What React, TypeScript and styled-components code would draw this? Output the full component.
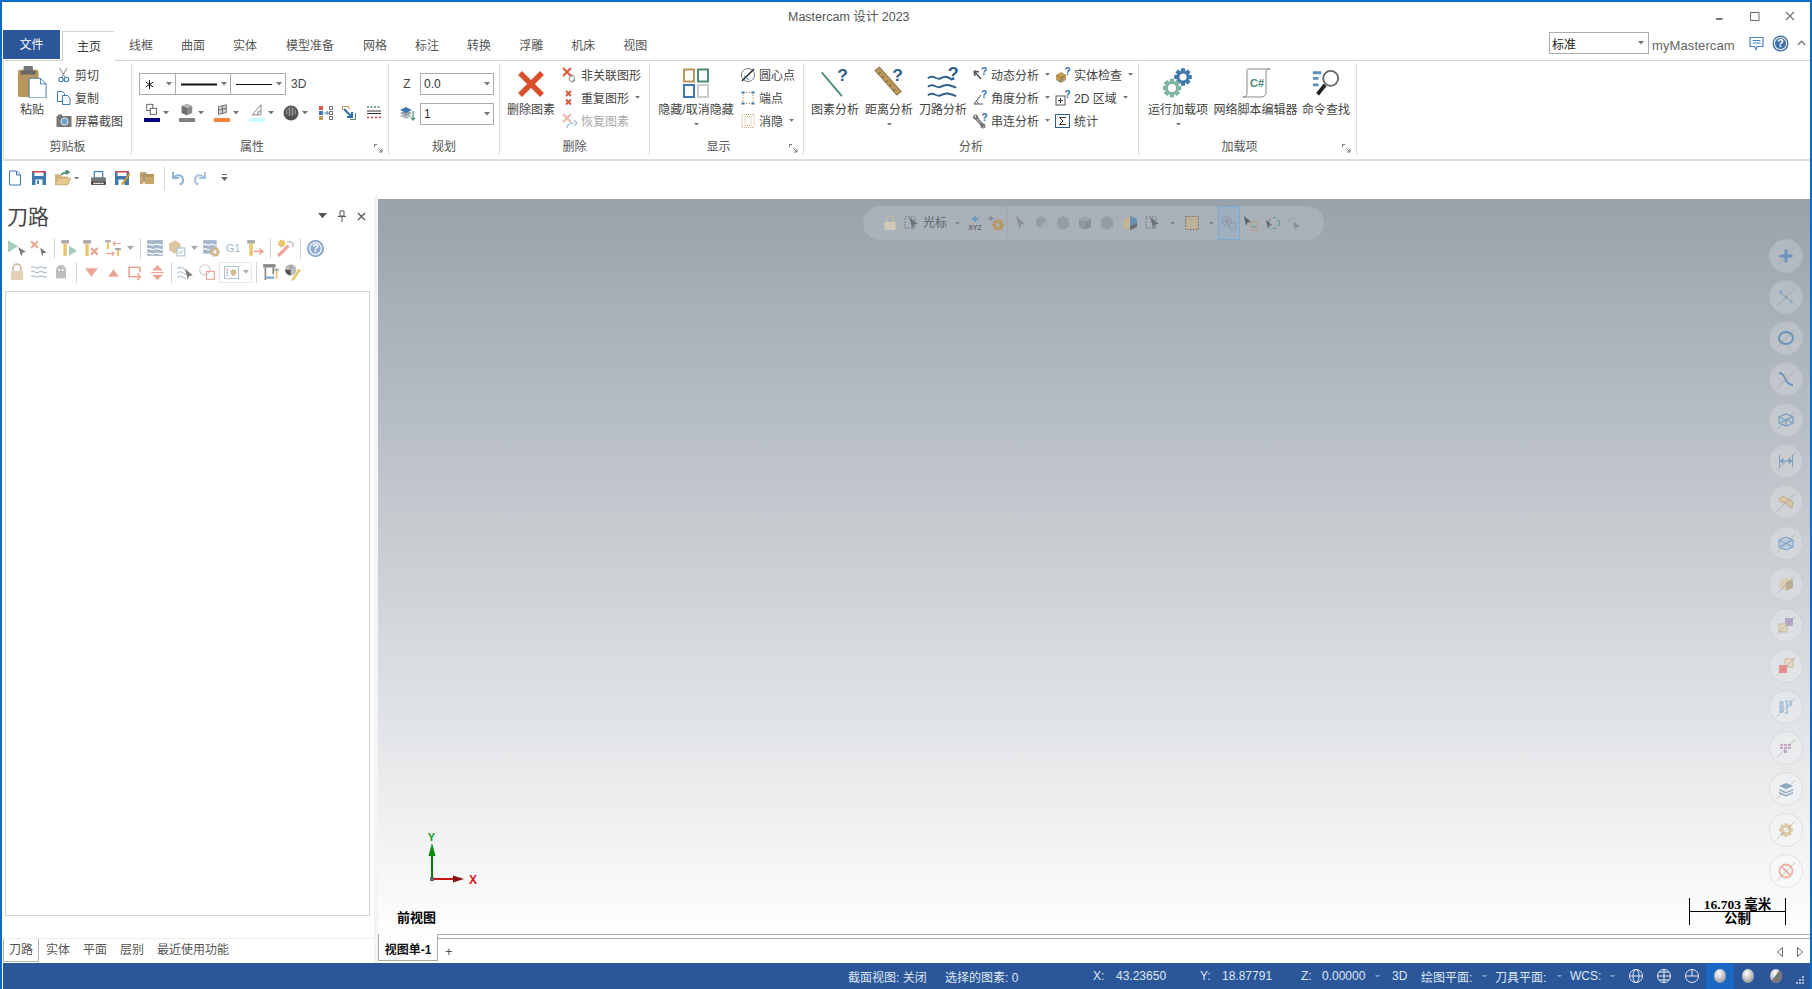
import React from 'react';
import styled, { createGlobalStyle } from 'styled-components';

const GlobalStyle = createGlobalStyle`
    html, body {
        margin: 0;
        padding: 0;
        background: #fff;
        overflow: hidden;
    }
    * {
        box-sizing: border-box;
    }
    body {
        font-family: "Liberation Sans", "Noto Sans CJK SC", sans-serif;
        font-size: 12px;
        color: #444;
    }
`;

const Page = styled.div`
    width: 1812px;
    height: 989px;
    display: flex;
    flex-direction: column;
    background: #fff;
    border: 2px solid #0b6bc8;
    border-bottom: none;
    overflow: hidden;
`;

/* ---------- title + tabs ---------- */

const TitleBar = styled.div`
    height: 28px;
    flex: none;
    display: flex;
    align-items: center;
    padding-left: 786px;
    color: #555;
    font-size: 12.5px;
`;

const TitleText = styled.div`
    flex: 1;
    padding-bottom: 2px;
`;

const WinButtons = styled.div`
    display: flex;
    align-items: center;
    margin-right: 3px;
`;

const WinButton = styled.div`
    width: 35px;
    height: 20px;
    display: flex;
    align-items: center;
    justify-content: center;
`;

const TabRow = styled.div`
    height: 30px;
    flex: none;
    display: flex;
    align-items: flex-end;
    padding-left: 1px;
    position: relative;
    z-index: 1;
`;

const FileTab = styled.div`
    width: 57px;
    height: 29px;
    margin-right: 3px;
    margin-bottom: 1px;
    padding-bottom: 2px;
    background: #2b579a;
    color: #fff;
    display: flex;
    align-items: center;
    justify-content: center;
`;

const Tab = styled.div<{ $active?: boolean; $wide?: boolean }>`
    height: ${(p) => (p.$active ? '30px' : '29px')};
    padding: 0 ${(p) => (p.$wide ? 15 : 14)}px ${(p) => (p.$active ? 3 : 2)}px;
    display: flex;
    align-items: center;
    background: #fff;
    color: ${(p) => (p.$active ? '#333' : '#555')};
    border: 1px solid ${(p) => (p.$active ? '#d2d2d2' : 'transparent')};
    border-bottom: none;
    margin: ${(p) => (p.$active ? '0 -1px -1px -1px' : '0 -1px 1px -1px')};
`;

const TabRight = styled.div`
    margin-left: auto;
    display: flex;
    align-items: center;
    height: 30px;
    padding-bottom: 4px;
`;

const ProfileCombo = styled.div`
    width: 100px;
    height: 22px;
    border: 1px solid #ababab;
    display: flex;
    align-items: center;
    justify-content: space-between;
    padding: 0 4px 0 2px;
    color: #222;
`;

const MyLink = styled.div`
    width: 101px;
    padding-left: 3px;
    padding-top: 4px;
    color: #666;
    font-size: 13px;
    letter-spacing: 0.1px;
`;

const Helpers = styled.div`
    display: flex;
    align-items: center;
    gap: 8px;
    margin-right: 4px;
    margin-left: -1px;
`;

/* ---------- ribbon ---------- */

const Ribbon = styled.div`
    height: 101px;
    flex: none;
    margin-left: 1px;
    display: flex;
    border-top: 1px solid #d2d2d2;
    border-bottom: 2px solid #dcdcdc;
    border-left: 1px solid #dcdcdc;
`;

const Group = styled.div<{ $w: number }>`
    width: ${(p) => p.$w}px;
    flex: none;
    height: 92px;
    margin-top: 2px;
    display: flex;
    flex-direction: column;
    border-right: 1px solid #dcdcdc;
    position: relative;
`;

const GroupBody = styled.div<{ $pad?: number }>`
    height: 73px;
    display: flex;
    padding-left: ${(p) => p.$pad ?? 0}px;
`;

const GroupLabel = styled.div<{ $launcher?: boolean }>`
    height: 18px;
    display: flex;
    align-items: center;
    justify-content: center;
    color: #555;
    padding-right: ${(p) => (p.$launcher ? 16 : 0)}px;
`;

const Launcher = styled.div`
    position: absolute;
    right: 5px;
    bottom: 2px;
    display: flex;
`;

const BigButton = styled.div<{ $w: number; $ml?: number }>`
    width: ${(p) => p.$w}px;
    margin-left: ${(p) => p.$ml ?? 0}px;
    flex: none;
    display: flex;
    flex-direction: column;
    align-items: center;
    white-space: nowrap;
`;

const BigIcon = styled.div`
    height: 38px;
    padding-bottom: 3px;
    display: flex;
    align-items: flex-end;
    justify-content: center;
`;

const BigLabel = styled.div`
    height: 18px;
    line-height: 18px;
    color: #444;
`;

const CaretRow = styled.div`
    height: 10px;
    display: flex;
    align-items: center;
`;

const SmallCol = styled.div<{ $w?: number; $ml?: number }>`
    width: ${(p) => (p.$w ? `${p.$w}px` : 'auto')};
    margin-left: ${(p) => p.$ml ?? 0}px;
    flex: none;
    display: flex;
    flex-direction: column;
`;

const SmallRow = styled.div<{ $off?: boolean }>`
    height: 23px;
    display: flex;
    align-items: center;
    gap: 3px;
    white-space: nowrap;
    color: ${(p) => (p.$off ? '#aaa' : '#444')};
`;

const CaretBox = styled.span`
    display: inline-flex;
    margin-left: 3px;
`;

const PropColumn = styled.div`
    display: flex;
    flex-direction: column;
    padding-top: 10px;
`;

const ComboRow = styled.div`
    display: flex;
    align-items: center;
`;

const LineCell = styled.div<{ $w: number }>`
    width: ${(p) => p.$w}px;
    height: 22px;
    border: 1px solid #ababab;
    margin-right: -1px;
    display: flex;
    align-items: center;
    justify-content: space-between;
    padding: 0 3px 0 5px;
    background: #fff;
`;

const ThreeD = styled.div`
    margin-left: 6px;
    color: #444;
`;

const SwatchRow = styled.div`
    display: flex;
    align-items: center;
    padding: 8px 0 0 4px;
`;

const SwatchButton = styled.div`
    width: 35px;
    flex: none;
    display: flex;
    align-items: center;
`;

const SwatchStack = styled.div`
    width: 17px;
    display: flex;
    flex-direction: column;
    align-items: center;
`;

const Swatch = styled.div<{ $c: string }>`
    width: 16px;
    height: 4px;
    margin-top: 1px;
    background: ${(p) => p.$c};
`;

const PlainTool = styled.div<{ $w: number }>`
    width: ${(p) => p.$w}px;
    flex: none;
    display: flex;
`;

const PlanColumn = styled.div`
    display: flex;
    flex-direction: column;
    gap: 8px;
    padding-top: 10px;
`;

const PlanRow = styled.div`
    display: flex;
    align-items: center;
`;

const PlanLabel = styled.div`
    width: 31px;
    display: flex;
    justify-content: center;
    padding-left: 5px;
    font-size: 12px;
`;

const PlanInput = styled.div`
    width: 74px;
    height: 22px;
    border: 1px solid #ababab;
    display: flex;
    align-items: center;
    justify-content: space-between;
    padding: 0 3px;
    color: #333;
`;

/* ---------- quick access ---------- */

const Qat = styled.div`
    height: 34px;
    flex: none;
    display: flex;
    align-items: center;
    padding-left: 5px;
`;

const QatItem = styled.div<{ $w: number }>`
    width: ${(p) => p.$w}px;
    flex: none;
    display: flex;
    align-items: center;
`;

const QatDivider = styled.div`
    width: 1px;
    height: 24px;
    background: #d8d8d8;
    margin: 0 5px 0 3px;
`;

/* ---------- main ---------- */

const Main = styled.div`
    flex: 1;
    min-height: 0;
    display: flex;
`;

const LeftPanel = styled.div`
    width: 376px;
    flex: none;
    display: flex;
    flex-direction: column;
    border-right: 4px solid #f4f4f4;
`;

const PanelHead = styled.div`
    height: 41px;
    flex: none;
    display: flex;
    align-items: center;
    padding: 0 8px 1px 5px;
`;

const PanelTitle = styled.div`
    flex: 1;
    font-size: 21px;
    color: #444;
`;

const PanelActions = styled.div`
    display: flex;
    align-items: center;
    gap: 10px;
    margin-top: 2px;
`;

const ToolRow = styled.div<{ $pad: number }>`
    height: 24px;
    flex: none;
    display: flex;
    align-items: center;
    padding-left: ${(p) => p.$pad}px;
`;

const ToolCell = styled.div`
    width: 22px;
    height: 22px;
    flex: none;
    display: flex;
    align-items: center;
    justify-content: center;
`;

const ToolCaret = styled.div`
    width: 12px;
    flex: none;
    display: flex;
    justify-content: center;
`;

const ToolSep = styled.div<{ $w: number }>`
    width: ${(p) => p.$w}px;
    flex: none;
    height: 21px;
    display: flex;
    justify-content: center;
    &::before {
        content: '';
        width: 1px;
        background: #d5d5d5;
    }
`;

const ToolCombo = styled.div`
    width: 33px;
    height: 21px;
    flex: none;
    margin-left: 1px;
    border: 1px solid #e6e6e6;
    display: flex;
    align-items: center;
    padding-left: 4px;
    gap: 4px;
`;

const TreeBox = styled.div`
    flex: 1;
    min-height: 0;
    margin: 7px 4px 22px 3px;
    border: 1px solid #d3d3d3;
`;

const BottomTabs = styled.div`
    height: 25px;
    flex: none;
    display: flex;
    align-items: flex-start;
    padding-left: 1px;
    border-top: 1px solid #eee;
`;

const BottomTab = styled.div<{ $active?: boolean }>`
    height: 23px;
    padding: 0 5px 3px;
    margin-right: 1px;
    display: flex;
    align-items: center;
    color: #555;
    border: 1px solid ${(p) => (p.$active ? '#b4b4b4' : 'transparent')};
    border-top: none;
    background: #fff;
`;

const Workspace = styled.div`
    flex: 1;
    min-width: 0;
    display: flex;
    flex-direction: column;
    padding-top: 4px;
`;

const Viewport = styled.div`
    flex: 1;
    min-height: 0;
    position: relative;
    overflow: hidden;
    background: linear-gradient(180deg, #98a2ab 0%, #b9bfc6 32%, #dcdfe2 66%, #fefefe 100%);
`;

const FloatBar = styled.div`
    position: absolute;
    left: 485px;
    top: 7px;
    width: 461px;
    height: 34px;
    border-radius: 17px;
    background: rgba(205, 210, 215, 0.28);
    display: flex;
    align-items: center;
    padding-left: 16px;
    color: #5c6369;
`;

const FloatItem = styled.div<{ $w: number; $on?: boolean }>`
    width: ${(p) => p.$w}px;
    height: ${(p) => (p.$on ? '34px' : 'auto')};
    flex: none;
    display: flex;
    align-items: center;
    justify-content: center;
    opacity: 0.72;
    background: ${(p) => (p.$on ? 'rgba(110, 170, 225, 0.25)' : 'transparent')};
    border: ${(p) => (p.$on ? '1px solid #6ba6d9' : 'none')};
`;

const FloatText = styled.div`
    width: 26px;
    flex: none;
    padding-bottom: 4px;
    white-space: nowrap;
`;

const FloatSep = styled.div`
    width: 1px;
    height: 34px;
    flex: none;
    background: rgba(150, 156, 162, 0.35);
`;

const SideRail = styled.div`
    position: absolute;
    right: 7px;
    top: 40px;
    display: flex;
    flex-direction: column;
    gap: 7px;
`;

const RailButton = styled.div`
    width: 34px;
    height: 34px;
    border-radius: 50%;
    background: rgba(255, 255, 255, 0.2);
    border: 1px solid rgba(150, 155, 160, 0.2);
    position: relative;
    display: flex;
    align-items: center;
    justify-content: center;
    &::after {
        content: '';
        position: absolute;
        left: 3px;
        right: 3px;
        top: 16px;
        height: 1px;
        background: rgba(130, 135, 140, 0.28);
        transform: rotate(-45deg);
    }
`;

const Triad = styled.div`
    position: absolute;
    left: 46px;
    bottom: 45px;
    display: flex;
`;

const ViewName = styled.div`
    position: absolute;
    left: 19px;
    bottom: 7px;
    color: #000;
    font-weight: 700;
    font-size: 13px;
    line-height: 18px;
`;

const ScaleBar = styled.div`
    position: absolute;
    right: 24px;
    bottom: 9px;
    width: 97px;
    height: 27px;
    border-left: 1px solid #000;
    border-right: 1px solid #000;
    color: #000;
    display: flex;
    flex-direction: column;
    align-items: center;
    font-weight: 700;
    font-size: 13.5px;
    line-height: 13px;
    font-family: "Liberation Serif", "Noto Sans CJK SC", serif;
`;

const ScaleTop = styled.div`
    width: 100%;
    height: 14px;
    text-align: center;
    white-space: nowrap;
    border-bottom: 1px solid #000;
`;

const SheetBar = styled.div`
    height: 29px;
    flex: none;
    display: flex;
    align-items: flex-start;
    border-top: 1px solid #a9a9a9;
    position: relative;
    &::before {
        content: '';
        position: absolute;
        left: 0;
        right: 0;
        top: 3px;
        height: 1px;
        background: #a9a9a9;
    }
`;

const SheetTab = styled.div`
    width: 60px;
    height: 27px;
    margin-top: -1px;
    background: #fff;
    border: 1px solid #a9a9a9;
    border-top: none;
    position: relative;
    z-index: 1;
    display: flex;
    align-items: center;
    justify-content: center;
    color: #111;
    font-weight: 700;
    white-space: nowrap;
    padding-top: 2px;
`;

const AddSheet = styled.div`
    margin-left: 7px;
    height: 27px;
    padding-top: 5px;
    display: flex;
    align-items: center;
    color: #555;
    font-size: 13px;
`;

const SheetArrows = styled.div`
    margin-left: auto;
    height: 27px;
    padding: 6px 7px 0 0;
    display: flex;
    align-items: center;
    gap: 14px;
`;

/* ---------- status ---------- */

const StatusBar = styled.div`
    height: 26px;
    flex: none;
    margin-left: 1px;
    background: #2b579a;
    color: #dfe7f2;
    display: flex;
    align-items: center;
    white-space: nowrap;
`;

const StatusText = styled.div<{ $w: number; $pl?: number }>`
    width: ${(p) => p.$w}px;
    padding-left: ${(p) => p.$pl ?? 0}px;
    flex: none;
    display: flex;
    align-items: center;
`;

const StatusCaret = styled.div`
    width: 11px;
    flex: none;
    display: flex;
    justify-content: center;
`;

const ShadeRow = styled.div`
    display: flex;
    margin-left: 4px;
`;

const ShadeCell = styled.div<{ $on?: boolean }>`
    width: 28px;
    height: 26px;
    flex: none;
    display: flex;
    align-items: center;
    justify-content: center;
    background: ${(p) => (p.$on ? '#1b68c4' : 'transparent')};
`;

const Grip = styled.div`
    margin-left: 6px;
    padding-top: 8px;
    display: flex;
`;

/* ---------- icons ---------- */

const Svg = styled.svg<{ $s: number; $h?: number }>`
    width: ${(p) => p.$s}px;
    height: ${(p) => p.$h ?? p.$s}px;
    flex: none;
    display: block;
`;

const Caret = ({ c = '#777', w = 7 }: { c?: string; w?: number }) => (
    <Svg $s={w} $h={(w * 4) / 7} viewBox="0 0 7 4">
        <path d="M0 0h7L3.5 4z" fill={c} />
    </Svg>
);

// cog outline for the add-in and settings icons
const gearD = (cx: number, cy: number, R: number, r: number, n: number) => {
    const pts: string[] = [];
    const step = (Math.PI * 2) / n;
    for (let i = 0; i < n; i++) {
        const a = i * step;
        [[r, -0.5], [R, -0.28], [R, 0.28], [r, 0.5]].forEach(([rad, k]) => {
            const t = a + k * step;
            pts.push(`${(cx + rad * Math.cos(t)).toFixed(2)} ${(cy + rad * Math.sin(t)).toFixed(2)}`);
        });
    }
    return `M${pts.join('L')}z`;
};

const icons: Record<string, React.ReactNode> = {
    cut: (
        <g fill="none" strokeWidth="1.1">
            <path d="M3.5 1L9 10M11 1L6 10" stroke="#8d949b" />
            <circle cx="5" cy="12.5" r="2.2" stroke="#3f78ad" />
            <circle cx="10.5" cy="12.5" r="2.2" stroke="#3f78ad" />
        </g>
    ),
    copy: (
        <g fill="#fff" stroke="#3f78ad">
            <path d="M1.5 1.5h5l2 2v8h-7z" />
            <path d="M6.5 5.5h5L14 8v6.5H6.500z" />
        </g>
    ),
    camera: (
        <g>
            <rect x="0.5" y="3" width="15" height="11" fill="#777" />
            <rect x="2" y="1.5" width="4" height="2" fill="#777" />
            <circle cx="8.5" cy="8.5" r="3.6" fill="#6aa0cc" stroke="#eee" />
        </g>
    ),
    layerA: (
        <g fill="none" stroke="#555">
            <rect x="2" y="1.5" width="7" height="7" />
            <rect x="6" y="6" width="7" height="7" fill="#fff" />
        </g>
    ),
    cube: (
        <g>
            <path d="M8 1l6 2.5v8L8 14l-6-2.5v-8z" fill="#8a8a8a" />
            <path d="M8 1l6 2.5L8 6 2 3.5z" fill="#b5b5b5" />
            <path d="M2 3.5L8 6v8l-6-2.5z" fill="#6f6f6f" />
        </g>
    ),
    plane: (
        <g stroke="#666" fill="#cfcfcf">
            <path d="M4 4l9-2v9l-9 2z" />
            <path d="M8.5 3v9M4 8l9-2" fill="none" />
        </g>
    ),
    wedge: <path d="M2.5 13.5L12.5 2v11.5zM9 13.5V10h3.5" fill="none" stroke="#777" />,
    sphere: (
        <g>
            <circle cx="8" cy="8" r="7.5" fill="#555" />
            <ellipse cx="8" cy="7" rx="5" ry="4.5" fill="#999" />
            <path d="M5 4v8M8 3v10M11 4v8" stroke="#333" />
        </g>
    ),
    dotsMove: (
        <g>
            <rect x="1" y="1" width="4" height="4" fill="#d9534f" />
            <rect x="1" y="6" width="4" height="4" fill="#3f78ad" />
            <rect x="1" y="11" width="4" height="4" fill="#c49a5a" />
            <path d="M6 8h4M8.5 6l2 2-2 2" stroke="#3f78ad" fill="none" />
            <rect x="11.5" y="1.5" width="3" height="3" fill="#fff" stroke="#777" />
            <rect x="11.5" y="6.5" width="3" height="3" fill="#fff" stroke="#777" />
            <rect x="11.5" y="11.5" width="3" height="3" fill="#fff" stroke="#777" />
        </g>
    ),
    moveBox: (
        <g fill="none">
            <path d="M1.5 5V1.5H8v3" stroke="#b8955a" />
            <path d="M9 14.5h5.5V8" stroke="#4d8a78" />
            <path d="M3 4l8 8M11 7v5H6" stroke="#2d6da8" strokeWidth="2" />
        </g>
    ),
    lineStyle: (
        <g>
            <path d="M1 2h14" stroke="#4d8a78" strokeWidth="1.5" strokeDasharray="2 1.5" />
            <path d="M1 6h14M1 8.5h14" stroke="#333" />
            <path d="M1 12.5h14" stroke="#c44" strokeWidth="1.5" strokeDasharray="2 2" />
        </g>
    ),
    layerStack: (
        <g>
            <path d="M1 10l6-3 6 3-6 3z" fill="#b7bcc2" />
            <path d="M1 7l6-3 6 3-6 3z" fill="#9aa0a6" />
            <path d="M1 4l6-3 6 3-6 3z" fill="#3f78ad" />
            <path d="M14 5v9M12 11.5l2 2.5 2-2.5" stroke="#4d8a78" fill="none" strokeWidth="1.2" />
        </g>
    ),
    xLink: (
        <g>
            <path d="M1 1l8 8M9 1L1 9" stroke="#d9563a" strokeWidth="2" />
            <path d="M9 8a3 3 0 1 1 1 6" stroke="#888" fill="none" />
            <path d="M13 13a3 3 0 1 1-2-4" stroke="#888" fill="none" />
        </g>
    ),
    xDouble: (
        <g stroke="#d9563a" strokeWidth="1.8">
            <path d="M4 1l5 5M9 1L4 6M4 9.5l5 5M9 9.5l-5 5" />
        </g>
    ),
    xRestore: (
        <g>
            <path d="M1 1l8 8M9 1L1 9" stroke="#efb7a8" strokeWidth="2" />
            <path d="M5 15c0-4 3-5 7-5M12 7l3 3-3 3" stroke="#a9c6e0" fill="none" strokeWidth="1.5" />
        </g>
    ),
    circleDot: (
        <g fill="none">
            <circle cx="8" cy="8" r="6.5" stroke="#777" />
            <path d="M2 14L14 2" stroke="#222" strokeWidth="1.5" />
            <path d="M4 9l5 4" stroke="#3f78ad" />
        </g>
    ),
    endPoints: (
        <g>
            <rect x="3" y="2.5" width="10" height="11" fill="none" stroke="#b8955a" strokeDasharray="1.5 1.5" />
            <path d="M1.5 1.5h3v2h-3zM11.5 1.5h3v2h-3zM1.5 12.5h3v2h-3zM11.5 12.5h3v2h-3z" fill="#3f78ad" />
        </g>
    ),
    blank: (
        <g fill="none" stroke="#c8a878" strokeDasharray="1 1">
            <rect x="2" y="1.5" width="12" height="13" />
            <rect x="5" y="3.5" width="6" height="9" />
        </g>
    ),
    qMove: (
        <g>
            <path d="M2 4l7 8M2 4l5 1M2 4l1 5" stroke="#555" fill="none" strokeWidth="1.5" />
            <text x="9" y="8" fontSize="10" fontWeight="700" fill="#2d6da8">?</text>
        </g>
    ),
    qAngle: (
        <g>
            <path d="M2 14h9M2 14l7-9M6 14c0-2-1-3-2-3" stroke="#555" fill="none" />
            <text x="9" y="8" fontSize="10" fontWeight="700" fill="#2d6da8">?</text>
        </g>
    ),
    qChain: (
        <g>
            <path d="M2 4l9 10M4 3l8 10" stroke="#777" fill="none" strokeWidth="1.4" />
            <circle cx="3.5" cy="4" r="2" fill="none" stroke="#555" />
            <circle cx="11" cy="13" r="2" fill="none" stroke="#555" />
            <text x="9.5" y="8" fontSize="10" fontWeight="700" fill="#2d6da8">?</text>
        </g>
    ),
    qBox: (
        <g>
            <path d="M1 8l5-3 5 3v5l-5 3-5-3z" fill="#c49a5a" />
            <path d="M1 8l5 3 5-3" stroke="#a07a3e" fill="none" />
            <path d="M3 13l2 2 3-4" stroke="#4d8a78" fill="none" />
            <text x="9.5" y="8" fontSize="10" fontWeight="700" fill="#2d6da8">?</text>
        </g>
    ),
    q2d: (
        <g>
            <rect x="1" y="6" width="9" height="9" fill="#fff" stroke="#555" />
            <path d="M3 10.5h5M5.5 8v5" stroke="#333" />
            <text x="9.5" y="8" fontSize="10" fontWeight="700" fill="#2d6da8">?</text>
        </g>
    ),
    sigma: (
        <g>
            <rect x="0.5" y="1.5" width="14" height="13" fill="#fff" stroke="#2d5f8a" />
            <path d="M11 4.5H4.5L8 8l-3.5 3.500H11" fill="none" stroke="#333" />
        </g>
    ),
    file: <path d="M2.5 1h7l4 4v10h-11zM9.5 1v4h4" fill="#fff" stroke="#3f78ad" />,
    save: (
        <g>
            <path d="M1 1h14v14H1z" fill="#3f78ad" />
            <rect x="3.5" y="1" width="9" height="5" fill="#fff" />
            <rect x="1" y="1" width="14" height="1.5" fill="#c44" />
            <rect x="4.5" y="9.5" width="7" height="5.5" fill="#fff" />
            <rect x="6" y="10.5" width="2" height="3.5" fill="#3f78ad" />
        </g>
    ),
    open: (
        <g>
            <path d="M1 4h5l1.5 2H13v8H1z" fill="#d6b57d" />
            <path d="M1 14l2.5-6.5H16L13 14z" fill="#e5c892" stroke="#b8955a" strokeWidth="0.5" />
            <path d="M7 5c1-3 4-3 6-3M11 0l3 2-3 2" stroke="#4d8a78" fill="none" strokeWidth="1.5" />
        </g>
    ),
    print: (
        <g>
            <rect x="4" y="1.5" width="8" height="6" fill="#fff" stroke="#2d6da8" />
            <rect x="1" y="7" width="14" height="5" fill="#777" />
            <rect x="1" y="11" width="14" height="3" fill="#444" />
            <rect x="3" y="12" width="10" height="1" fill="#fff" />
        </g>
    ),
    saveAs: (
        <g>
            <path d="M1 1h14v14H1z" fill="#3f78ad" />
            <rect x="3.5" y="1" width="9" height="5" fill="#fff" />
            <rect x="1" y="1" width="14" height="1.5" fill="#c44" />
            <rect x="4.5" y="9.5" width="6" height="5.5" fill="#fff" />
            <path d="M8 13L15 3l1.5 1-7 10-2 .5z" fill="#e3a92f" stroke="#8a6a20" strokeWidth="0.4" />
        </g>
    ),
    zipFolder: (
        <g>
            <path d="M1 2h6l1 2h7v10H1z" fill="#c9a76a" />
            <path d="M1 4h14v3H1z" fill="#b8955a" />
            <path d="M4 2h2v13H4z" fill="#f1e4c8" />
            <path d="M4 3h2M4 5h2M4 7h2M4 9h2M4 11h2" stroke="#555" />
        </g>
    ),
    undo: <path d="M3 2v6h6M3.5 7.5c3-3.5 9-3 9.500 2 .3 2.5-1 4.5-3.500 5" fill="none" stroke="#8fb3d4" strokeWidth="2" />,
    redo: <path d="M13 2v6H7M12.5 7.5c-3-3.5-9-3-9.500 2-.3 2.5 1 4.5 3.500 5" fill="none" stroke="#a9c6e0" strokeWidth="2" />,
    playCursor: (
        <g>
            <path d="M0 1l9 5.5L0 12z" fill="#a6cdbb" />
            <path d="M9 7l7 4.5-3 .5-1 3.500z" fill="#777" />
        </g>
    ),
    xCursor: (
        <g>
            <path d="M1 2l6 6M7 2L1 8" stroke="#eda394" strokeWidth="1.6" />
            <path d="M9 8l6 4-3 .5-1 3z" fill="#777" />
        </g>
    ),
    toolPlay: (
        <g>
            <rect x="1" y="1" width="7" height="3" fill="#a9a9a9" />
            <rect x="3" y="4" width="3" height="11" fill="#e8c46a" />
            <path d="M8 6l7 4.5L8 15z" fill="#a6cdbb" />
        </g>
    ),
    toolX: (
        <g>
            <rect x="1" y="1" width="7" height="3" fill="#a9a9a9" />
            <rect x="3" y="4" width="3" height="11" fill="#e8c46a" />
            <path d="M8 8l6 6M14 8l-6 6" stroke="#eda394" strokeWidth="2" />
        </g>
    ),
    toolSwap: (
        <g>
            <rect x="1" y="1" width="5" height="2" fill="#a9a9a9" />
            <rect x="2.5" y="3" width="2" height="6" fill="#e8c46a" />
            <path d="M15 4H8M10 2L8 4l2 2" stroke="#eda394" fill="none" />
            <path d="M2 13h7M7 11l2 2-2 2" stroke="#eda394" fill="none" />
            <rect x="10" y="8" width="5" height="2" fill="#a9a9a9" />
            <rect x="11.5" y="10" width="2" height="5" fill="#e8c46a" />
        </g>
    ),
    wavesBox: (
        <g>
            <rect x="1" y="1" width="14" height="14" fill="#a3b7c9" />
            <path d="M1 5c3-2 4 2 7 0s4 2 7 0M1 9c3-2 4 2 7 0s4 2 7 0M1 13c3-2 4 2 7 0s4 2 7 0" stroke="#fff" fill="none" />
        </g>
    ),
    boxCheck: (
        <g>
            <path d="M1 4l5-3 5 3v6l-5 3-5-3z" fill="#dcc6a3" />
            <rect x="8" y="8" width="7" height="7" fill="#fff" stroke="#a6bdd1" />
            <path d="M9.5 11l1.5 2 2.5-3" stroke="#a6cdbb" fill="none" />
        </g>
    ),
    wavesGear: (
        <g>
            <rect x="1" y="1" width="12" height="12" fill="#a3b7c9" />
            <path d="M1 5c3-2 4 2 6 0s3 2 6 0M1 9c3-2 4 2 6 0" stroke="#fff" fill="none" />
            <path d={gearD(11.5, 11.5, 4.5, 3.2, 7)} fill="#d3b98e" />
            <circle cx="11.5" cy="11.5" r="1.4" fill="#fff" />
        </g>
    ),
    toolArrow: (
        <g>
            <rect x="1" y="1" width="7" height="3" fill="#a9a9a9" />
            <rect x="3" y="4" width="3" height="11" fill="#e8c46a" />
            <path d="M7 11h7M12 8.5l3 2.5-3 2.5" stroke="#eda394" fill="none" strokeWidth="1.5" />
        </g>
    ),
    wand: (
        <g>
            <path d="M1 14L10 5l2 2-9 9z" fill="#eda394" />
            <path d="M10 3a4 4 0 0 1 5 1v3" stroke="#aaa" fill="none" />
            <path d={gearD(5, 4, 3.5, 2.4, 7)} fill="#e8c46a" />
        </g>
    ),
    help: (
        <g>
            <circle cx="8" cy="8" r="7.5" fill="#a3bedb" stroke="#7d9dc0" />
            <circle cx="8" cy="8" r="5.4" fill="#8cabcf" stroke="#fff" />
            <text x="8" y="11.5" textAnchor="middle" fontSize="10" fontWeight="700" fill="#fff">?</text>
        </g>
    ),
    lock: (
        <g>
            <path d="M4.5 7V4.5a3.5 3.5 0 0 1 7 0V7" stroke="#cdbb9c" fill="none" strokeWidth="1.5" />
            <rect x="2.5" y="7" width="11" height="8" rx="1" fill="#e3d3b6" />
        </g>
    ),
    waves: <path d="M1 4c3-2 4 2 7 0s4 2 7 0M1 8c3-2 4 2 7 0s4 2 7 0M1 12c3-2 4 2 7 0s4 2 7 0" stroke="#a9bfd3" fill="none" />,
    ghost: (
        <g>
            <path d="M3 15V6a5 5 0 0 1 10 0v9l-2-1.5L9.5 15 8 13.5 6.5 15 5 13.5z" fill="#bdbdbd" />
            <circle cx="6.3" cy="6" r="1" fill="#fff" />
            <circle cx="9.7" cy="6" r="1" fill="#fff" />
        </g>
    ),
    triDown: <path d="M2 4h12L8 12z" fill="#eda394" />,
    triUp: <path d="M3 12h10L8 5z" fill="#eda394" />,
    hook: <path d="M12 8V3H2v9h9M9.5 9l3 3-3 3" fill="none" stroke="#eda394" strokeWidth="1.5" />,
    upDown: <path d="M8 1l5 5H3zM8 15l5-5H3zM2 7.5h12v1H2z" fill="#eda394" />,
    wavesCursor: (
        <g>
            <path d="M1 5c3-3 5 0 8 1M1 9c3-3 5 0 8 1M1 13c3-3 5 0 8 1" stroke="#b9c9d8" fill="none" />
            <path d="M8 5l7 6-3.5.5-1 3.5z" fill="#777" />
        </g>
    ),
    circleSquare: (
        <g fill="none">
            <circle cx="6" cy="6" r="4.5" stroke="#ccc" />
            <rect x="7.5" y="7.5" width="7" height="7" stroke="#eda394" />
        </g>
    ),
    listGear: (
        <g>
            <rect x="0.5" y="1.5" width="15" height="13" fill="#fff" stroke="#a6bdd1" />
            <path d="M2.5 4h2v2h-2z" fill="#eda394" />
            <path d="M2.5 7h2v2h-2z" fill="#a3bedb" />
            <path d="M2.5 10h2v2h-2z" fill="#a6cdbb" />
            <path d={gearD(10, 8, 3.6, 2.5, 7)} fill="#d3b98e" />
        </g>
    ),
    machine: (
        <g>
            <rect x="1" y="1" width="11" height="3" fill="#888" />
            <path d="M3 4v11M10 4v6" stroke="#888" strokeWidth="1.5" />
            <path d="M3 13h8" stroke="#7fa8cd" strokeWidth="2" />
            <rect x="11" y="5" width="4" height="2" fill="#a9a9a9" />
            <rect x="12.3" y="7" width="1.5" height="7" fill="#e8c46a" />
        </g>
    ),
    ballPen: (
        <g>
            <circle cx="6" cy="6" r="5" fill="#bbb" />
            <path d="M6 1a5 5 0 0 1 0 5H1a5 5 0 0 0 5 5V6" fill="#555" />
            <path d="M7 14l6-9 2 1.3-6 9-2 .5z" fill="#e8c46a" />
        </g>
    ),
    cursorDash: (
        <g>
            <rect x="1" y="2" width="10" height="11" fill="none" stroke="#555" strokeDasharray="1.5 1.5" />
            <path d="M5 2l9 7-4 .5L8.500 14z" fill="#53595f" />
        </g>
    ),
    xyz: (
        <g>
            <path d="M8 1v6M5 4h6" stroke="#5b8fbd" strokeWidth="2" />
            <text x="8" y="15" textAnchor="middle" fontSize="7" fontWeight="700" fill="#555">XYZ</text>
        </g>
    ),
    plusGear: (
        <g>
            <path d="M3 1v5M.5 3.5h5" stroke="#666" />
            <path d={gearD(10, 10, 6, 4, 8)} fill="#bd8f3f" />
            <circle cx="10" cy="10" r="2" fill="#a5adb5" />
        </g>
    ),
    cursor: <path d="M4 1l9 8-4 .5L7.5 14z" fill="#7a828a" />,
    cubeCheck: (
        <g>
            <path d="M2 4l5-3 5 3v6l-5 3-5-3z" fill="#8d969e" />
            <circle cx="11" cy="11" r="3.5" fill="#a5adb5" />
        </g>
    ),
    cubeGrey: <path d="M2 4l6-3 6 3v8l-6 3-6-3z" fill="#8d969e" />,
    cubeFace: (
        <g>
            <path d="M2 4l6-3 6 3-6 3z" fill="#98a1a9" />
            <path d="M2 4l6 3v8l-6-3z" fill="#868f97" />
            <path d="M14 4L8 7v8l6-3z" fill="#79828a" />
        </g>
    ),
    cubeColor: (
        <g>
            <path d="M1 4l7-3 7 3v8l-7 3-7-3z" fill="#cfb88b" />
            <path d="M8 1l7 3v4L8 11z" fill="#4b86ba" />
            <path d="M8 11l7-3v4l-7 3z" fill="#50565c" />
        </g>
    ),
    fillDash: <rect x="1.5" y="1.5" width="13" height="13" fill="#c4b18c" stroke="#555" strokeDasharray="1.5 1.5" />,
    visGear: (
        <g fill="none" stroke="#84919e">
            <circle cx="6" cy="6" r="4.5" />
            <circle cx="6" cy="6" r="2" fill="#84919e" />
            <circle cx="11.5" cy="11" r="3.5" />
        </g>
    ),
    cursorCheck: (
        <g>
            <path d="M1 1l7 6-3.5.5L3 11z" fill="#3f464c" />
            <rect x="8" y="7" width="7" height="8" fill="none" stroke="#b79b62" />
            <path d="M9.5 11l1.5 2 2.5-3" stroke="#3f9a7a" fill="none" />
        </g>
    ),
    cursorCycle: (
        <g>
            <path d="M1 5l6 5-3 .5L3 14z" fill="#3f464c" />
            <circle cx="9" cy="8" r="5.5" stroke="#3d8f73" fill="none" strokeDasharray="4 2" />
        </g>
    ),
    cursorBack: (
        <g>
            <path d="M6 6l7 6-3.5.5L8 15z" fill="#7a828a" />
            <path d="M2 5c2-3 5-3 7-1M1 2v4h4" stroke="#949ca4" fill="none" />
        </g>
    ),
    railPlus: <path d="M8 1.5v13M1.5 8h13" stroke="#6a94bd" strokeWidth="3" />,
    railPts: <path d="M1 3l14 10M3 1v4M1 3h4M8 6v4M6 8h4M13 11v4M11 13h4" stroke="#84a5c4" fill="none" />,
    railCircle: <ellipse cx="8" cy="8" rx="7" ry="6" fill="none" stroke="#6a94bd" strokeWidth="2" />,
    railSpline: <path d="M1 2c5 0 5 4 7 7 1.5 3 3 5 7 5" fill="none" stroke="#6a94bd" strokeWidth="1.8" />,
    railWire: <path d="M1 5l7-3 7 3v6l-7 3-7-3zM1 5l7 3 7-3M8 8v6M1 11l7-3 7 3" fill="none" stroke="#7a9dc0" strokeWidth="1.2" />,
    railDim: <path d="M1.5 2v12M14.5 2v12M2 8h12M2 8l3-2.5v5zM14 8l-3-2.5v5z" fill="#7a9dc0" stroke="#7a9dc0" />,
    railSurf: <path d="M1 5l4-3 10 6-1 6-4-2-2-3-5-1z" fill="#d9c6a3" stroke="#c3ad85" />,
    railSolid: <path d="M1 5l7-3 7 3v7l-7 3-7-3zM1 5l14 7M15 5L1 12" fill="#bccde0" stroke="#7a9dc0" />,
    railBox: (
        <g>
            <path d="M1 4l7-2.5L15 4v8l-7 2.5L1 12z" fill="#dccfb7" />
            <path d="M8 6l7-2v8l-7 2.5z" fill="#bdae93" />
        </g>
    ),
    railTwo: (
        <g>
            <rect x="7" y="1" width="8" height="8" fill="#b9a7cc" />
            <rect x="1" y="7" width="8" height="8" fill="#e2d6bf" stroke="#c8b99c" />
        </g>
    ),
    railTwoRed: (
        <g>
            <rect x="7" y="1" width="8" height="8" fill="#e6dbc5" stroke="#c8b99c" />
            <rect x="1" y="7" width="8" height="8" fill="#ec8f8f" />
        </g>
    ),
    railFlag: <path d="M2 3h3v2H2zM2 7h3v2H2zM2 11h3v2H2zM7 2h2v12H7M11 2c3 0 3 5 0 5" fill="none" stroke="#a2bdd8" strokeWidth="1.4" />,
    railGrid: <path d="M2 4h3v2H2zM6 4h3v2H6zM10 4h3v2h-3zM2 7h3v2H2zM6 7h3v2H6zM10 7h3v2h-3zM6 10h3v3H6z" fill="#c9a5c9" />,
    railLayers: <path d="M8 2l7 3-7 3-7-3zM1 8l7 3 7-3v1.5l-7 3-7-3zM1 11l7 3 7-3v1.5l-7 3-7-3z" fill="#8ba9c5" />,
    railGear: (
        <g>
            <path d={gearD(8, 8, 7, 5, 8)} fill="#dcc9a3" />
            <circle cx="8" cy="8" r="2.5" fill="#f2f3f4" />
        </g>
    ),
    railBan: (
        <g fill="none" stroke="#f0b0a5" strokeWidth="1.8">
            <circle cx="8" cy="8" r="6.5" />
            <path d="M3.5 3.5l9 9" />
        </g>
    ),
    globe: (
        <g fill="none" stroke="#e6edf6">
            <circle cx="8" cy="8" r="6.5" />
            <ellipse cx="8" cy="8" rx="3" ry="6.5" />
            <path d="M1.5 8h13" />
        </g>
    ),
    globeB: (
        <g fill="none" stroke="#e6edf6">
            <circle cx="8" cy="8" r="6.5" />
            <path d="M3 4h10M1.5 8h13M3 12h10M8 1.5v13" />
        </g>
    ),
    globeC: (
        <g fill="none" stroke="#e6edf6">
            <circle cx="8" cy="8" r="6.5" />
            <path d="M8 1.5V8M1.5 8h13" />
        </g>
    ),
};

const Ico = ({ n, s = 16 }: { n: string; s?: number }) => (
    <Svg $s={s} viewBox="0 0 16 16">
        {icons[n]}
    </Svg>
);

const PasteIcon = () => (
    <Svg $s={30} $h={32} viewBox="0 0 32 34">
        <rect x="1" y="4" width="22" height="29" rx="2" fill="#b8955a" />
        <rect x="7" y="0" width="10" height="8" rx="1" fill="#777" />
        <rect x="4" y="5" width="16" height="4" fill="#666" />
        <path d="M13 13h12l6 6v15H13z" fill="#fff" stroke="#3f78ad" />
        <path d="M25 13v6h6" fill="none" stroke="#3f78ad" />
    </Svg>
);

const BigX = () => (
    <Svg $s={28} viewBox="0 0 28 28">
        <path d="M3 3l22 22M25 3L3 25" stroke="#d9502e" strokeWidth="5.5" />
    </Svg>
);

const FourBoxes = () => (
    <Svg $s={28} $h={30} viewBox="0 0 28 30">
        <rect x="2" y="1.5" width="10" height="12" fill="none" stroke="#b8955a" strokeWidth="2" />
        <rect x="16" y="1.5" width="10" height="12" fill="none" stroke="#4d8a78" strokeWidth="2" />
        <rect x="2" y="17" width="10" height="12" fill="none" stroke="#3f78ad" strokeWidth="2" />
        <rect x="16" y="17" width="10" height="12" fill="none" stroke="#ccc" strokeWidth="2" />
    </Svg>
);

const Question = ({ x, y }: { x: number; y: number }) => (
    <text x={x} y={y} fontSize="19" fontWeight="700" fill="#2d5f8a" fontFamily="Liberation Sans">?</text>
);

const EntityAnalyze = () => (
    <Svg $s={33} viewBox="0 0 36 36">
        <path d="M3 8l22 26" stroke="#4d8a78" strokeWidth="2" />
        <Question x={20} y={17} />
    </Svg>
);

const DistanceAnalyze = () => (
    <Svg $s={33} viewBox="0 0 36 36">
        <path d="M2 6l5-4 24 27-5 4z" fill="#b8955a" stroke="#6b5228" strokeWidth="0.8" />
        <path d="M8 8l-2 2M12 12l-2 2M16 17l-2 2M20 21l-2 2M24 26l-2 2" stroke="#4a3a1a" />
        <Question x={21} y={17} />
    </Svg>
);

const PathAnalyze = () => (
    <Svg $s={34} viewBox="0 0 36 36">
        <path d="M2 15c6-5 9 3 14 0s8-1 12 2M2 24c6-5 9 3 14 0s8-2 16 1M2 33c6-5 9 3 14 0s8-2 16 1" fill="none" stroke="#2d5f8a" strokeWidth="2" />
        <Question x={23} y={17} />
    </Svg>
);

const AddinIcon = () => (
    <Svg $s={30} viewBox="0 0 30 30">
        <path d={gearD(20, 9, 9, 6, 8)} fill="#3f78ad" />
        <circle cx="20" cy="9" r="3.5" fill="#fff" />
        <path d={gearD(9, 20, 9.5, 6.5, 8)} fill="#7fb5a3" />
        <circle cx="9" cy="20" r="4" fill="#fff" />
    </Svg>
);

const ScriptIcon = () => (
    <Svg $s={30} viewBox="0 0 30 30">
        <path d="M7 1h22c-3 0-4 1-4 3v21c0 2-2 4-5 4H2c3 0 4-2 4-4V4c0-2 0-3 1-3z" fill="#fff" stroke="#888" />
        <text x="9" y="19" fontSize="11" fontWeight="700" fill="#4d8a78" fontFamily="Liberation Sans">C#</text>
    </Svg>
);

const FindIcon = () => (
    <Svg $s={30} $h={29} viewBox="0 0 32 31">
        <circle cx="21" cy="10" r="8" fill="#fff" stroke="#666" strokeWidth="2" />
        <path d="M15 17L7 27" stroke="#222" strokeWidth="4" />
        <path d="M2 4h9M2 10h6M2 17h6" stroke="#5b8fbd" strokeWidth="3" />
    </Svg>
);

const TriadIcon = () => (
    <Svg $s={80} $h={60} viewBox="0 0 80 60">
        <path d="M8 50V20" stroke="#0a7a0a" strokeWidth="2" />
        <path d="M8 14l-3.5 13h7z" fill="#0a8a0a" />
        <path d="M8 50h24" stroke="#c81414" strokeWidth="2" />
        <path d="M40 50l-11-3.5v7z" fill="#8a0f0f" />
        <rect x="6" y="48" width="4" height="4" fill="#666" />
        <text x="7.5" y="12" textAnchor="middle" fontSize="11" fontWeight="700" fill="#12a012" fontFamily="Liberation Sans">Y</text>
        <text x="45" y="54.5" fontSize="12" fontWeight="700" fill="#e01010" fontFamily="Liberation Sans">X</text>
    </Svg>
);

const Launch = () => (
    <Svg $s={9} viewBox="0 0 9 9">
        <path d="M.5 3V.5H3M4 4l4 4M8 5v3H5" fill="none" stroke="#777" />
    </Svg>
);

const StarMark = () => (
    <Svg $s={9} viewBox="0 0 11 11">
        <path d="M5.5 0v11M1 2.5l9 6M10 2.5l-9 6" stroke="#111" strokeWidth="1.2" />
    </Svg>
);

const Ball = ({ half }: { half?: boolean }) => (
    <Svg $s={16} viewBox="0 0 16 16">
        <defs>
            <radialGradient id={half ? 'ballh' : 'ball'} cx="0.4" cy="0.3" r="0.8">
                <stop offset="0" stopColor="#fff" />
                <stop offset="1" stopColor="#8d8d8d" />
            </radialGradient>
        </defs>
        <ellipse cx="8" cy="8" rx="6" ry="7" fill={`url(#${half ? 'ballh' : 'ball'})`} />
        {half && <path d="M3.5 13L11.5 2.5a7 7 0 0 1 0 11c-3 2-6 1-8-.5z" fill="#777" />}
    </Svg>
);

const tabs = ['线框', '曲面', '实体', '模型准备', '网格', '标注', '转换', '浮雕', '机床', '视图'];

const railIcons = [
    'railPlus', 'railPts', 'railCircle', 'railSpline', 'railWire', 'railDim', 'railSurf', 'railSolid',
    'railBox', 'railTwo', 'railTwoRed', 'railFlag', 'railGrid', 'railLayers', 'railGear', 'railBan',
];

const swatches = [
    { icon: 'layerA', color: '#000080' },
    { icon: 'cube', color: '#808080' },
    { icon: 'plane', color: '#ff7f3f' },
    { icon: 'wedge', color: '#c8ffff' },
];

const SmallItem = ({ n, t, caret, off }: { n: string; t: string; caret?: boolean; off?: boolean }) => (
    <SmallRow $off={off}>
        <Ico n={n} />
        {t}
        {caret && (
            <CaretBox>
                <Caret w={5} />
            </CaretBox>
        )}
    </SmallRow>
);

const App = () => (
    <Page>
        <GlobalStyle />
        <TitleBar>
            <TitleText>Mastercam 设计 2023</TitleText>
            <WinButtons>
                <WinButton>
                    <Svg $s={10} viewBox="0 0 10 10"><path d="M1 7h6.5v2H1z" fill="#777" /></Svg>
                </WinButton>
                <WinButton>
                    <Svg $s={10} viewBox="0 0 10 10"><path d="M.5 1.5H9v8H.5z" fill="none" stroke="#666" /></Svg>
                </WinButton>
                <WinButton>
                    <Svg $s={10} viewBox="0 0 10 10"><path d="M1 1l8 8M9 1L1 9" stroke="#777" strokeWidth="1.3" /></Svg>
                </WinButton>
            </WinButtons>
        </TitleBar>

        <TabRow>
            <FileTab>文件</FileTab>
            <Tab $active>主页</Tab>
            {tabs.map((t) => (
                <Tab key={t} $wide={t.length > 2}>{t}</Tab>
            ))}
            <TabRight>
                <ProfileCombo>
                    标准
                    <Caret w={6} />
                </ProfileCombo>
                <MyLink>myMastercam</MyLink>
                <Helpers>
                    <Svg $s={15} viewBox="0 0 15 15">
                        <path d="M1 1.5h13v9H8l-1 3-1.5-3H1z" fill="#fff" stroke="#4d86bd" strokeWidth="1.2" />
                        <path d="M3.5 4.5h8M3.5 7h8" stroke="#4d86bd" />
                    </Svg>
                    <Svg $s={17} viewBox="0 0 16 16">
                        <circle cx="8" cy="8" r="7.5" fill="#3f6fa8" />
                        <circle cx="8" cy="8" r="5.7" fill="#3f6fa8" stroke="#fff" />
                        <text x="8" y="11.5" textAnchor="middle" fontSize="10" fontWeight="700" fill="#fff">?</text>
                    </Svg>
                    <Svg $s={9} $h={6} viewBox="0 0 10 6"><path d="M1 5l4-4 4 4" fill="none" stroke="#777" strokeWidth="1.6" /></Svg>
                </Helpers>
            </TabRight>
        </TabRow>

        <Ribbon>
            <Group $w={128}>
                <GroupBody $pad={12}>
                    <BigButton $w={32}>
                        <BigIcon><PasteIcon /></BigIcon>
                        <BigLabel>粘贴</BigLabel>
                    </BigButton>
                    <SmallCol $ml={8}>
                        <SmallItem n="cut" t="剪切" />
                        <SmallItem n="copy" t="复制" />
                        <SmallItem n="camera" t="屏幕截图" />
                    </SmallCol>
                </GroupBody>
                <GroupLabel>剪贴板</GroupLabel>
            </Group>

            <Group $w={257}>
                <GroupBody $pad={7}>
                    <PropColumn>
                        <ComboRow>
                            <LineCell $w={37}>
                                <StarMark />
                                <Caret w={6} />
                            </LineCell>
                            <LineCell $w={56}>
                                <Svg $s={36} $h={3} viewBox="0 0 36 3"><rect width="36" height="2" y="0.5" fill="#111" /></Svg>
                                <Caret w={6} />
                            </LineCell>
                            <LineCell $w={56}>
                                <Svg $s={36} $h={3} viewBox="0 0 36 3"><rect width="36" height="1" y="1" fill="#111" /></Svg>
                                <Caret w={6} />
                            </LineCell>
                            <ThreeD>3D</ThreeD>
                        </ComboRow>
                        <SwatchRow>
                            {swatches.map((s) => (
                                <SwatchButton key={s.color}>
                                    <SwatchStack>
                                        <Ico n={s.icon} s={14} />
                                        <Swatch $c={s.color} />
                                    </SwatchStack>
                                    <CaretBox><Caret w={6} /></CaretBox>
                                </SwatchButton>
                            ))}
                            <SwatchButton>
                                <Ico n="sphere" />
                                <CaretBox><Caret w={6} /></CaretBox>
                            </SwatchButton>
                            <PlainTool $w={23}><Ico n="dotsMove" /></PlainTool>
                            <PlainTool $w={25}><Ico n="moveBox" /></PlainTool>
                            <PlainTool $w={16}><Ico n="lineStyle" /></PlainTool>
                        </SwatchRow>
                    </PropColumn>
                </GroupBody>
                <GroupLabel $launcher>属性</GroupLabel>
                <Launcher><Launch /></Launcher>
            </Group>

            <Group $w={111}>
                <GroupBody>
                    <PlanColumn>
                        <PlanRow>
                            <PlanLabel>Z</PlanLabel>
                            <PlanInput>0.0<Caret w={6} /></PlanInput>
                        </PlanRow>
                        <PlanRow>
                            <PlanLabel><Ico n="layerStack" /></PlanLabel>
                            <PlanInput>1<Caret w={6} /></PlanInput>
                        </PlanRow>
                    </PlanColumn>
                </GroupBody>
                <GroupLabel>规划</GroupLabel>
            </Group>

            <Group $w={150}>
                <GroupBody>
                    <BigButton $w={62}>
                        <BigIcon><BigX /></BigIcon>
                        <BigLabel>删除图素</BigLabel>
                    </BigButton>
                    <SmallCol>
                        <SmallItem n="xLink" t="非关联图形" />
                        <SmallItem n="xDouble" t="重复图形" caret />
                        <SmallItem n="xRestore" t="恢复图素" off />
                    </SmallCol>
                </GroupBody>
                <GroupLabel>删除</GroupLabel>
            </Group>

            <Group $w={154}>
                <GroupBody>
                    <BigButton $w={92}>
                        <BigIcon><FourBoxes /></BigIcon>
                        <BigLabel>隐藏/取消隐藏</BigLabel>
                        <CaretRow><Caret w={5} /></CaretRow>
                    </BigButton>
                    <SmallCol $ml={-2}>
                        <SmallItem n="circleDot" t="圆心点" />
                        <SmallItem n="endPoints" t="端点" />
                        <SmallItem n="blank" t="消隐" caret />
                    </SmallCol>
                </GroupBody>
                <GroupLabel $launcher>显示</GroupLabel>
                <Launcher><Launch /></Launcher>
            </Group>

            <Group $w={335}>
                <GroupBody $pad={4}>
                    <BigButton $w={54}>
                        <BigIcon><EntityAnalyze /></BigIcon>
                        <BigLabel>图素分析</BigLabel>
                    </BigButton>
                    <BigButton $w={54}>
                        <BigIcon><DistanceAnalyze /></BigIcon>
                        <BigLabel>距离分析</BigLabel>
                        <CaretRow><Caret w={5} /></CaretRow>
                    </BigButton>
                    <BigButton $w={54}>
                        <BigIcon><PathAnalyze /></BigIcon>
                        <BigLabel>刀路分析</BigLabel>
                    </BigButton>
                    <SmallCol $w={83} $ml={2}>
                        <SmallItem n="qMove" t="动态分析" caret />
                        <SmallItem n="qAngle" t="角度分析" caret />
                        <SmallItem n="qChain" t="串连分析" caret />
                    </SmallCol>
                    <SmallCol>
                        <SmallItem n="qBox" t="实体检查" caret />
                        <SmallItem n="q2d" t="2D 区域" caret />
                        <SmallItem n="sigma" t="统计" />
                    </SmallCol>
                </GroupBody>
                <GroupLabel>分析</GroupLabel>
            </Group>

            <Group $w={218}>
                <GroupBody $pad={8}>
                    <BigButton $w={62}>
                        <BigIcon><AddinIcon /></BigIcon>
                        <BigLabel>运行加载项</BigLabel>
                        <CaretRow><Caret w={5} /></CaretRow>
                    </BigButton>
                    <BigButton $w={85} $ml={4}>
                        <BigIcon><ScriptIcon /></BigIcon>
                        <BigLabel>网络脚本编辑器</BigLabel>
                    </BigButton>
                    <BigButton $w={50} $ml={3}>
                        <BigIcon><FindIcon /></BigIcon>
                        <BigLabel>命令查找</BigLabel>
                    </BigButton>
                </GroupBody>
                <GroupLabel $launcher>加载项</GroupLabel>
                <Launcher><Launch /></Launcher>
            </Group>
        </Ribbon>

        <Qat>
            <QatItem $w={24}><Ico n="file" /></QatItem>
            <QatItem $w={23}><Ico n="save" /></QatItem>
            <QatItem $w={36}><Ico n="open" s={17} /><CaretBox><Caret w={5} /></CaretBox></QatItem>
            <QatItem $w={24}><Ico n="print" s={17} /></QatItem>
            <QatItem $w={25}><Ico n="saveAs" /></QatItem>
            <QatItem $w={22}><Ico n="zipFolder" /></QatItem>
            <QatDivider />
            <QatItem $w={22}><Ico n="undo" /></QatItem>
            <QatItem $w={29}><Ico n="redo" /></QatItem>
            <QatItem $w={10}>
                <Svg $s={7} $h={8} viewBox="0 0 7 8"><path d="M1 0h5v1H1zM0 3h7L3.5 7z" fill="#666" /></Svg>
            </QatItem>
        </Qat>

        <Main>
            <LeftPanel>
                <PanelHead>
                    <PanelTitle>刀路</PanelTitle>
                    <PanelActions>
                        <Caret c="#555" w={9} />
                        <Svg $s={10} $h={12} viewBox="0 0 10 12"><path d="M3 1h4v5H3zM1 6.5h8M5 7v5" fill="none" stroke="#555" /></Svg>
                        <Svg $s={9} viewBox="0 0 9 9"><path d="M1 1l7 7M8 1L1 8" stroke="#555" strokeWidth="1.3" /></Svg>
                    </PanelActions>
                </PanelHead>

                <ToolRow $pad={4}>
                    <ToolCell><Ico n="playCursor" s={18} /></ToolCell>
                    <ToolCell><Ico n="xCursor" s={18} /></ToolCell>
                    <ToolSep $w={8} />
                    <ToolCell><Ico n="toolPlay" s={18} /></ToolCell>
                    <ToolCell><Ico n="toolX" s={18} /></ToolCell>
                    <ToolCell><Ico n="toolSwap" s={18} /></ToolCell>
                    <ToolCaret><Caret c="#aaa" /></ToolCaret>
                    <ToolSep $w={8} />
                    <ToolCell><Ico n="wavesBox" s={18} /></ToolCell>
                    <ToolCell><Ico n="boxCheck" s={18} /></ToolCell>
                    <ToolCaret><Caret c="#aaa" /></ToolCaret>
                    <ToolCell><Ico n="wavesGear" s={18} /></ToolCell>
                    <ToolCell>
                        <Svg $s={16} viewBox="0 0 16 16">
                            <text x="8" y="12" textAnchor="middle" fontSize="11" fill="#9db8d3" fontFamily="Liberation Sans">G1</text>
                        </Svg>
                    </ToolCell>
                    <ToolCell><Ico n="toolArrow" s={18} /></ToolCell>
                    <ToolSep $w={8} />
                    <ToolCell><Ico n="wand" s={18} /></ToolCell>
                    <ToolSep $w={8} />
                    <ToolCell><Ico n="help" s={17} /></ToolCell>
                </ToolRow>

                <ToolRow $pad={4}>
                    <ToolCell><Ico n="lock" s={18} /></ToolCell>
                    <ToolCell><Ico n="waves" s={18} /></ToolCell>
                    <ToolCell><Ico n="ghost" s={16} /></ToolCell>
                    <ToolSep $w={8} />
                    <ToolCell><Ico n="triDown" s={17} /></ToolCell>
                    <ToolCell><Ico n="triUp" s={17} /></ToolCell>
                    <ToolCell><Ico n="hook" s={17} /></ToolCell>
                    <ToolCell><Ico n="upDown" s={17} /></ToolCell>
                    <ToolSep $w={6} />
                    <ToolCell><Ico n="wavesCursor" s={18} /></ToolCell>
                    <ToolCell><Ico n="circleSquare" s={18} /></ToolCell>
                    <ToolCombo>
                        <Ico n="listGear" s={15} />
                        <Caret c="#aaa" w={6} />
                    </ToolCombo>
                    <ToolSep $w={8} />
                    <ToolCell><Ico n="machine" s={18} /></ToolCell>
                    <ToolCell><Ico n="ballPen" s={18} /></ToolCell>
                </ToolRow>

                <TreeBox />

                <BottomTabs>
                    <BottomTab $active>刀路</BottomTab>
                    <BottomTab>实体</BottomTab>
                    <BottomTab>平面</BottomTab>
                    <BottomTab>层别</BottomTab>
                    <BottomTab>最近使用功能</BottomTab>
                </BottomTabs>
            </LeftPanel>

            <Workspace>
                <Viewport>
                    <FloatBar>
                        <FloatItem $w={22}><Ico n="lock" /></FloatItem>
                        <FloatItem $w={22}><Ico n="cursorDash" /></FloatItem>
                        <FloatText>光标</FloatText>
                        <FloatItem $w={16}><Caret c="#6d747b" w={5} /></FloatItem>
                        <FloatItem $w={20}><Ico n="xyz" /></FloatItem>
                        <FloatItem $w={22}><Ico n="plusGear" /></FloatItem>
                        <FloatSep />
                        <FloatItem $w={24}><Ico n="cursor" /></FloatItem>
                        <FloatItem $w={20}><Ico n="cubeCheck" /></FloatItem>
                        <FloatItem $w={22}><Ico n="cubeGrey" /></FloatItem>
                        <FloatItem $w={22}><Ico n="cubeFace" /></FloatItem>
                        <FloatItem $w={22}><Ico n="cubeGrey" /></FloatItem>
                        <FloatItem $w={24}><Ico n="cubeColor" /></FloatItem>
                        <FloatItem $w={22}><Ico n="cursorDash" /></FloatItem>
                        <FloatItem $w={16}><Caret c="#6d747b" w={5} /></FloatItem>
                        <FloatItem $w={24}><Ico n="fillDash" /></FloatItem>
                        <FloatItem $w={14}><Caret c="#6d747b" w={5} /></FloatItem>
                        <FloatItem $w={22} $on><Ico n="visGear" /></FloatItem>
                        <FloatItem $w={22}><Ico n="cursorCheck" /></FloatItem>
                        <FloatItem $w={22}><Ico n="cursorCycle" /></FloatItem>
                        <FloatItem $w={22}><Ico n="cursorBack" /></FloatItem>
                    </FloatBar>

                    <SideRail>
                        {railIcons.map((n) => (
                            <RailButton key={n}>
                                <Ico n={n} />
                            </RailButton>
                        ))}
                    </SideRail>

                    <Triad><TriadIcon /></Triad>
                    <ViewName>前视图</ViewName>
                    <ScaleBar>
                        <ScaleTop>16.703 毫米</ScaleTop>
                        <div>公制</div>
                    </ScaleBar>
                </Viewport>

                <SheetBar>
                    <SheetTab>视图单-1</SheetTab>
                    <AddSheet>+</AddSheet>
                    <SheetArrows>
                        <Svg $s={6} $h={10} viewBox="0 0 6 10"><path d="M5.5.5v9L.5 5z" fill="#fff" stroke="#666" /></Svg>
                        <Svg $s={6} $h={10} viewBox="0 0 6 10"><path d="M.5.5v9l5-4.5z" fill="#fff" stroke="#666" /></Svg>
                    </SheetArrows>
                </SheetBar>
            </Workspace>
        </Main>

        <StatusBar>
            <StatusText $w={845} />
            <StatusText $w={97}>截面视图: 关闭</StatusText>
            <StatusText $w={148}>选择的图素: 0</StatusText>
            <StatusText $w={23}>X:</StatusText>
            <StatusText $w={84}>43.23650</StatusText>
            <StatusText $w={22}>Y:</StatusText>
            <StatusText $w={79}>18.87791</StatusText>
            <StatusText $w={21}>Z:</StatusText>
            <StatusText $w={50}>0.00000</StatusText>
            <StatusCaret><Caret c="#7f9bc4" w={5} /></StatusCaret>
            <StatusText $w={38} $pl={9}>3D</StatusText>
            <StatusText $w={58}>绘图平面:</StatusText>
            <StatusCaret><Caret c="#7f9bc4" w={5} /></StatusCaret>
            <StatusText $w={64} $pl={5}>刀具平面:</StatusText>
            <StatusCaret><Caret c="#7f9bc4" w={5} /></StatusCaret>
            <StatusText $w={42} $pl={5}>WCS:</StatusText>
            <StatusCaret><Caret c="#7f9bc4" w={5} /></StatusCaret>
            <ShadeRow>
                <ShadeCell><Ico n="globe" /></ShadeCell>
                <ShadeCell><Ico n="globeB" /></ShadeCell>
                <ShadeCell><Ico n="globeC" /></ShadeCell>
                <ShadeCell $on><Ball /></ShadeCell>
                <ShadeCell><Ball /></ShadeCell>
                <ShadeCell><Ball half /></ShadeCell>
            </ShadeRow>
            <Grip>
                <Svg $s={8} viewBox="0 0 8 8"><path d="M6 0h2v2H6zM3 3h2v2H3zM6 3h2v2H6zM0 6h2v2H0zM3 6h2v2H3zM6 6h2v2H6z" fill="#a8bcd8" /></Svg>
            </Grip>
        </StatusBar>
    </Page>
);

export default App;
